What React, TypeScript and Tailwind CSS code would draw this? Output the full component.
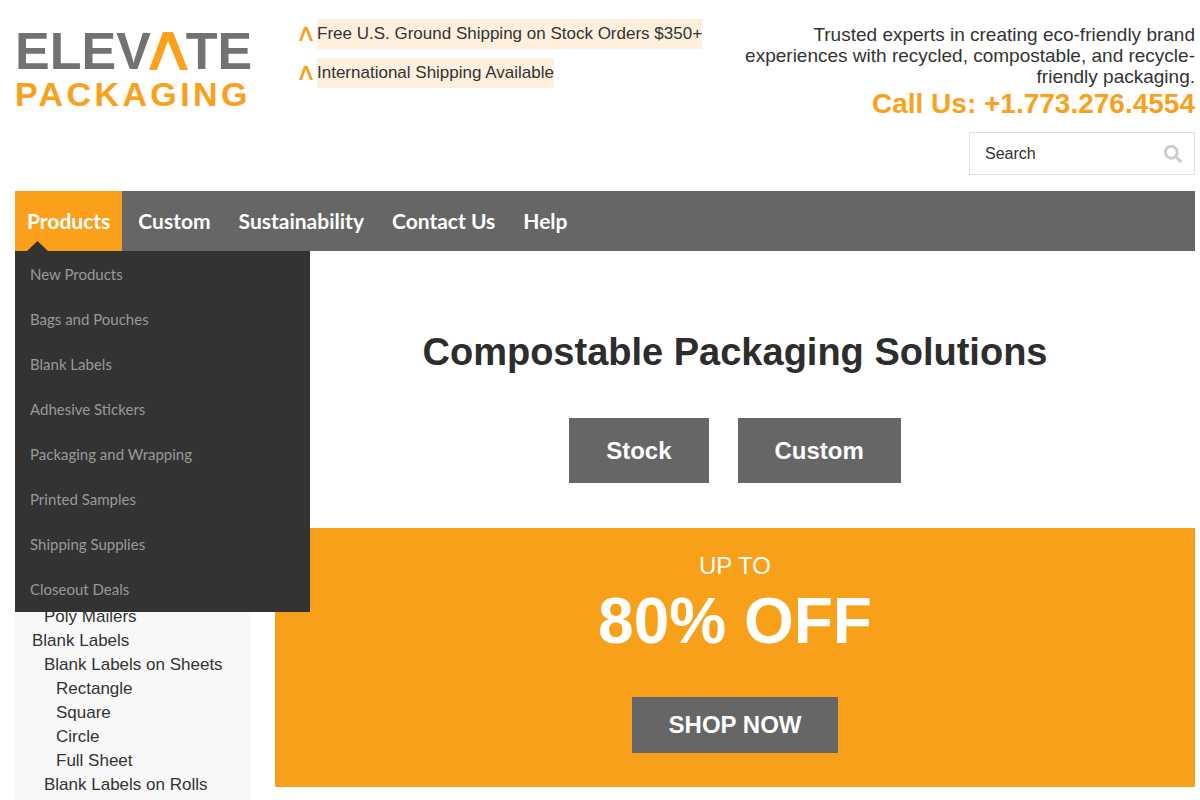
import { useState } from 'react';
import { FaSearch } from 'react-icons/fa';

const navLinks = ['Products', 'Custom', 'Sustainability', 'Contact Us', 'Help'];

const productMenu = [
  'New Products',
  'Bags and Pouches',
  'Blank Labels',
  'Adhesive Stickers',
  'Packaging and Wrapping',
  'Printed Samples',
  'Shipping Supplies',
  'Closeout Deals',
];

const categories = [
  { label: 'Poly Mailers', indent: 'pl-3' },
  { label: 'Blank Labels', indent: 'pl-0' },
  { label: 'Blank Labels on Sheets', indent: 'pl-3' },
  { label: 'Rectangle', indent: 'pl-6' },
  { label: 'Square', indent: 'pl-6' },
  { label: 'Circle', indent: 'pl-6' },
  { label: 'Full Sheet', indent: 'pl-6' },
  { label: 'Blank Labels on Rolls', indent: 'pl-3' },
];

const promos = ['Free U.S. Ground Shipping on Stock Orders $350+', 'International Shipping Available'];

function Peak({ className }: { className: string }) {
  return (
    <svg className={className} viewBox="0 0 39 38" preserveAspectRatio="none" fill="#faa01b" aria-hidden="true">
      <path d="M0 38 L14 0 H24 L39 38 H31 L19 9 L8 38 Z" />
    </svg>
  );
}

function Logo() {
  return (
    <a href="#" aria-label="Elevate Packaging" className="block w-[260px] shrink-0 pt-7 font-bold">
      <span className="flex items-center text-[52px] leading-[46px] text-[#727271]">
        ELEV
        <Peak className="-mx-[2px] h-[38px] w-[39px]" />
        TE
      </span>
      <span className="block text-[34px] leading-10 tracking-widest text-[#faa01b]">PACKAGING</span>
    </a>
  );
}

function Header() {
  const [query, setQuery] = useState('');

  return (
    <header className="flex h-[191px] items-start">
      <Logo />
      <ul className="flex flex-col gap-[9px] pt-[19px] pl-6">
        {promos.map((promo) => (
          <li key={promo} className="flex items-center gap-1">
            <Peak className="h-[14px] w-[14px]" />
            <span className="bg-[#fff0de] text-[17px] leading-[30px] whitespace-nowrap">{promo}</span>
          </li>
        ))}
      </ul>
      <div className="ml-auto flex w-[450px] flex-col items-end pt-6 text-right">
        <p className="text-[19px] leading-[21px]">
          Trusted experts in creating eco-friendly brand experiences with recycled, compostable, and recycle-friendly
          packaging.
        </p>
        <a href="tel:+17732764554" className="text-[28px] leading-[34px] font-bold text-[#faa01b]">
          Call Us: +1.773.276.4554
        </a>
        <form
          className="mt-[11px] flex h-[43px] w-[226px] items-center border border-[#e0e0e0] pr-3 pl-[15px]"
          onSubmit={(e) => e.preventDefault()}
        >
          <input
            type="text"
            aria-label="Search"
            placeholder="Search"
            value={query}
            onChange={(e) => setQuery(e.target.value)}
            className="min-w-0 flex-1 text-base outline-none placeholder:text-[#333]"
          />
          <button type="submit" aria-label="Submit search">
            <FaSearch className="h-[18px] w-[18px] text-[#ccc]" />
          </button>
        </form>
      </div>
    </header>
  );
}

function Navigation() {
  return (
    <nav className="relative h-[60px] bg-[#666] font-['Lato',sans-serif]">
      <ul className="flex h-full gap-1 text-[21px] font-bold text-white">
        {navLinks.map((label, i) => (
          <li key={label}>
            <a href="#" className={`flex h-full items-center px-3 ${i === 0 ? 'bg-[#faa01b]' : ''}`}>
              {label}
            </a>
          </li>
        ))}
      </ul>

      {/* Products dropdown */}
      <div className="absolute top-full left-0 z-10 w-[295px] bg-[#333] pt-px">
        <svg className="absolute bottom-full left-3 h-[10px] w-[21px]" viewBox="0 0 21 10" fill="#333" aria-hidden="true">
          <path d="M0 10 L10.500 0 L21 10 Z" />
        </svg>
        <ul>
          {productMenu.map((label) => (
            <li key={label}>
              <a href="#" className="block px-[15px] text-[15px] leading-[45px] text-[#999]">
                {label}
              </a>
            </li>
          ))}
        </ul>
      </div>
    </nav>
  );
}

export default function App() {
  return (
    <div className="flex min-h-screen flex-col bg-white pr-[5px] pl-[15px] font-['Liberation_Sans',Arial,sans-serif] text-[#333]">
      <Header />
      <Navigation />
      <main className="flex flex-1 gap-6">
        <aside className="w-[236px] shrink-0 bg-[#f8f8f8] pt-[354px] pl-[17px]">
          <ul className="text-[17px] leading-6">
            {categories.map((item) => (
              <li key={item.label} className={item.indent}>
                <a href="#">{item.label}</a>
              </li>
            ))}
          </ul>
        </aside>

        <div className="flex-1 text-center">
          <section className="flex flex-col items-center pt-20 pb-[45px]">
            <h1 className="text-[38px] leading-[42px] font-bold text-[#2d2d2d]">Compostable Packaging Solutions</h1>
            <div className="mt-[45px] flex gap-[29px] text-2xl font-bold text-white">
              <a href="#" className="bg-[#666] px-[37px] leading-[65px]">
                Stock
              </a>
              <a href="#" className="bg-[#666] px-[37px] leading-[65px]">
                Custom
              </a>
            </div>
          </section>

          <section className="flex flex-col items-center bg-[#f9a01b] pt-6 pb-[34px] text-white">
            <p className="text-2xl leading-7">UP TO</p>
            <p className="text-[64px] leading-[82px] font-bold">80% OFF</p>
            <a href="#" className="mt-[35px] bg-[#666] px-[37px] text-2xl leading-[56px] font-bold">
              SHOP NOW
            </a>
          </section>
        </div>
      </main>
    </div>
  );
}
